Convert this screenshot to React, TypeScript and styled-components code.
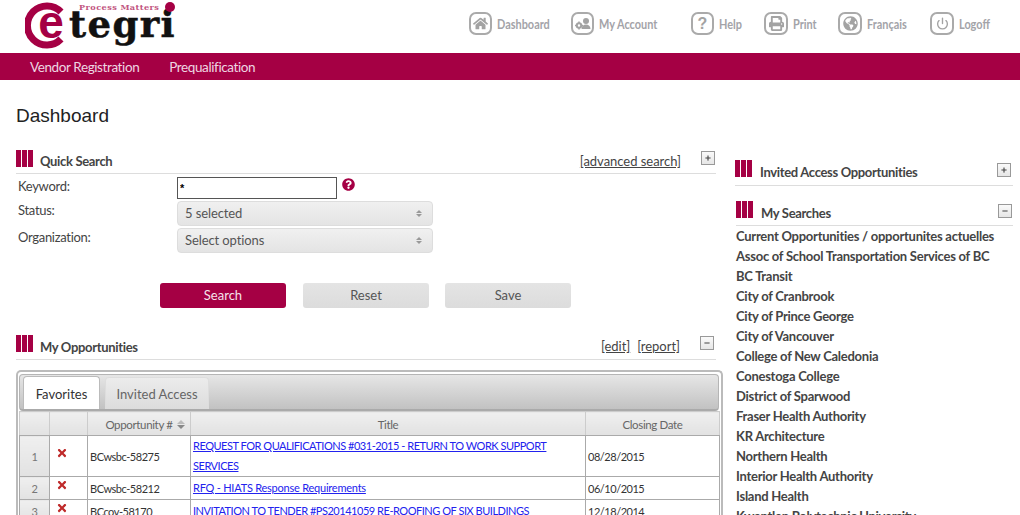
import React from "react";
import styled, { createGlobalStyle } from "styled-components";
import { FaHome, FaPrint, FaGlobeAmericas, FaTimes, FaQuestionCircle, FaPlus, FaMinus } from "react-icons/fa";
import { FiPower } from "react-icons/fi";

const maroon = "#a50044";
const bodyFont = `"Lato", "Liberation Sans", sans-serif`;

const Global = createGlobalStyle`
  html, body { margin: 0; padding: 0; height: 515px; overflow: hidden; background: #fff; }
  body { font-family: ${bodyFont}; color: #444; }
  * { box-sizing: border-box; }
`;

const Header = styled.header`
  height: 53px; display: flex; justify-content: space-between; align-items: flex-start;
  padding: 0 29px 0 25px;
`;
const Tools = styled.nav`display: flex; gap: 22px; padding-top: 12px;`;
const Tool = styled.a<{ $wide?: boolean }>`
  display: flex; align-items: center; gap: 5px; height: 23px;
  margin-right: ${(p) => (p.$wide ? "14px" : "0")};
  font: bold 14px ${bodyFont};
  color: #a3a3a8;
`;
const ToolIcon = styled.span<{ $w?: number }>`
  width: ${(p) => p.$w ?? 23}px; height: 23px; border: 2px solid #aaa; border-radius: 7px;
  display: flex; align-items: center; justify-content: center; color: #a3a3a3;
  font: bold 16px "Liberation Sans", sans-serif;
`;
const ToolLabel = styled.span<{ $w: number }>`
  display: block; width: ${(p) => p.$w}px; white-space: nowrap;
  transform: scaleX(0.78); transform-origin: left center;
`;
const NavBar = styled.nav`
  height: 27px; background: ${maroon}; display: flex; gap: 30px; padding-left: 30px; align-items: center;
  color: #eed6e2; font-size: 13.5px; letter-spacing: -0.4px;
`;
const PageTitle = styled.h1`
  margin: 24px 0 20px 16px; font: normal 19px/24px "Liberation Sans", sans-serif; color: #222;
`;
const Columns = styled.main`display: flex; align-items: flex-start; padding-left: 16px;`;
const Left = styled.section`width: 707px; flex: none;`;
const Right = styled.aside`width: 278px; flex: none; margin-left: 12px; padding-top: 10px;`;

const SectionHead = styled.div<{ $w: number; $h?: number; $indent?: number; $mt?: number }>`
  display: flex; align-items: flex-start; height: ${(p) => p.$h ?? 26}px; border-bottom: 1px solid #ddd;
  width: ${(p) => p.$w}px;
  margin-left: ${(p) => p.$indent ?? 0}px;
  margin-top: ${(p) => p.$mt ?? 0}px;
`;
const BarsBox = styled.span`display: flex; gap: 1px; margin-top: 2px; margin-right: 7px;`;
const Bar = styled.i`display: block; width: 5px; height: 17px; background: ${maroon};`;
const SectionTitle = styled.h2<{ $top?: number; $ml?: number }>`
  margin: ${(p) => p.$top ?? 6}px 0 0 ${(p) => p.$ml ?? 0}px; font-size: 13px; font-weight: 700; line-height: 16px;
  color: #444; flex: 1; letter-spacing: -0.33px;
`;
const Links = styled.div`display: flex; gap: 7px; margin-top: 5px; margin-right: 20px;`;
const BracketLink = styled.a`
  font-size: 13px; line-height: 16px; color: #444; text-decoration: underline; letter-spacing: -0.03px;
`;
const ToggleBox = styled.span<{ $mr?: number; $mt?: number }>`
  width: 14px; height: 14px; border: 1px solid #999; background: linear-gradient(#fafafa, #e6e6e6);
  display: flex; align-items: center; justify-content: center; color: #444;
  margin-top: ${(p) => p.$mt ?? 3}px; margin-right: ${(p) => p.$mr ?? 1}px;
`;
const Form = styled.div`
  display: grid; grid-template-columns: 159px 1fr; padding: 3px 0 0 2px; row-gap: 2px; width: 700px;
`;
const Label = styled.label`font-size: 13px; line-height: 16px; padding-top: 1px; color: #444; letter-spacing: -0.3px;`;
const KeywordRow = styled.div`display: flex; gap: 5px;`;
const Keyword = styled.input`
  width: 160px; height: 22px; border: 1px solid #555; padding: 0 2px; font: bold 11px "Liberation Sans", sans-serif; outline: none;
`;
const HelpMark = styled.span`color: ${maroon}; display: flex; padding-top: 1px; font-size: 13px;`;
const Select = styled.div`
  width: 256px; height: 25px; border: 1px solid #ddd; border-radius: 4px;
  background: linear-gradient(#f0f0f0, #e4e4e4);
  display: flex; align-items: center; justify-content: space-between; padding: 0 10px 1px 7px;
  font-size: 13px; color: #555; letter-spacing: -0.1px;
`;
const Updown = styled.span`display: flex; flex-direction: column; gap: 1px;`;
const Tri = styled.i<{ $up?: boolean; $size?: number; $c?: string }>`
  display: block; width: 0; height: 0;
  border-left: ${(p) => p.$size ?? 3}px solid transparent;
  border-right: ${(p) => p.$size ?? 3}px solid transparent;
  ${(p) => (p.$up ? "border-bottom" : "border-top")}: ${(p) => p.$size ?? 3}px solid ${(p) => p.$c ?? "#999"};
`;
const Buttons = styled.div`display: flex; margin: 30px 0 25px 144px;`;
const Btn = styled.button<{ $primary?: boolean }>`
  width: 126px; height: 25px; margin-right: ${(p) => (p.$primary ? "17px" : "16px")};
  border: 0; border-radius: 3px; font: 13px ${bodyFont}; padding: 0 0 2px;
  background: ${(p) => (p.$primary ? maroon : "linear-gradient(#e4e4e4,#dcdcdc)")};
  color: ${(p) => (p.$primary ? "#f5e3eb" : "#555")};
`;
const Panel = styled.div`
  margin-top: 10px; height: 200px; border: 2px solid #bbb; border-bottom: 0; border-radius: 5px 5px 0 0;
  padding: 2px 1px 0 1px;
`;
const TabBar = styled.div`
  height: 37px; margin-right: 1px; border-radius: 4px; border: 1px solid #b5b5b5; border-bottom: 2px solid #aaa;
  background: linear-gradient(#e6e6e6, #c2c2c2); display: flex; align-items: flex-end; gap: 5px; padding-left: 3px;
`;
const Tab = styled.div<{ $active?: boolean }>`
  height: ${(p) => (p.$active ? "33px" : "32px")};
  width: ${(p) => (p.$active ? "77px" : "104px")};
  border: 1px solid ${(p) => (p.$active ? "#bbb" : "#ddd")}; border-bottom: 0; border-radius: 4px 4px 0 0;
  background: ${(p) => (p.$active ? "#fff" : "linear-gradient(#ececec,#dcdcdc)")};
  color: ${(p) => (p.$active ? "#333" : "#666")};
  font-size: 13px; display: flex; align-items: center; justify-content: center; padding-top: 1px;
`;
const Table = styled.table`
  width: 701px; border-collapse: collapse; table-layout: fixed; font-size: 11px; letter-spacing: -0.47px; color: #333;
`;
const Th = styled.th`
  height: 24px; font-weight: 400; color: #666; border: 1px solid #ccc; border-bottom: 1px solid #aaa;
  background: linear-gradient(#efefef, #e2e2e2); font-size: 11.5px; letter-spacing: -0.35px; padding: 2px 0 0;
`;
const OppTh = styled(Th)`padding-left: 12px;`;
const ThInner = styled.span`display: inline-flex; align-items: center; gap: 4px;`;
const SortArrows = styled.span`display: inline-flex; flex-direction: column; gap: 1px;`;
const Td = styled.td`
  border: 1px solid #aaa; padding: 0 2px; vertical-align: middle;
`;
const NumCell = styled(Td)`
  background: linear-gradient(#efefef, #e2e2e2); color: #777; text-align: center;
`;
const XCell = styled(Td)`color: #bf2a2a; font-size: 12px; padding: 0 0 3px 6px;`;
const TitleLink = styled.a<{ $ls?: number }>`
  color: #2222ee; text-decoration: underline; line-height: 20px;
  letter-spacing: ${(p) => p.$ls ?? -0.47}px;
`;
const TitleText = styled.div`line-height: 20px;`;
const SearchList = styled.ul`list-style: none; margin: 0 0 0 1px; padding: 0;`;
const SearchItem = styled.li`
  height: 20px; line-height: 20px; font-size: 13px; font-weight: 700; color: #444; white-space: nowrap; letter-spacing: -0.26px;
`;

const Bars = () => (
  <BarsBox><Bar /><Bar /><Bar /></BarsBox>
);

const AccountIcon = () => (
  <svg width="18" height="14" viewBox="0 0 18 14" fill="#a3a3a3">
    <circle cx="12" cy="4" r="3" />
    <path d="M7.5 12c0-3 2-4.500 4.500-4.500s4.500 1.500 4.500 4.500z" />
    <circle cx="5" cy="8.500" r="2.200" fill="none" stroke="#a3a3a3" strokeWidth="2" />
    <path d="M5 4.500v1.500M5 11v1.500M1 8.500h1.500M7.500 8.500H9" stroke="#a3a3a3" strokeWidth="1.500" />
  </svg>
);

const Logo = () => (
  <svg width="154" height="50" viewBox="0 0 154 50" style={{ display: "block" }}>
    <path d="M36 12a19.500 19.500 0 1 0 0 27" fill="none" stroke={maroon} strokeWidth="7" />
    <text x="26" y="38" textAnchor="middle" fontFamily="'Liberation Sans', sans-serif" fontWeight="700" fontSize="46" fill={maroon}>e</text>
    <text x="54" y="9.500" fontFamily="'DejaVu Serif', serif" fontSize="8.200" fontWeight="700" letterSpacing="0.400" fill="#c2557f">Process Matters</text>
    <text x="44" y="37" fontFamily="'DejaVu Serif', serif" fontWeight="700" fontSize="37" letterSpacing="1.400" stroke="#111" strokeWidth="0.500" fill="#111">tegri</text>
    <circle cx="145" cy="7" r="5" fill={maroon} />
  </svg>
);

const rows = [
  { n: 1, id: "BCwsbc-58275", t: "REQUEST FOR QUALIFICATIONS #031-2015 - RETURN TO WORK SUPPORT SERVICES", d: "08/28/2015", h: 41 },
  { n: 2, id: "BCwsbc-58212", t: "RFQ - HIATS Response Requirements", d: "06/10/2015", h: 23, ls: -0.23 },
  { n: 3, id: "BCcov-58170", t: "INVITATION TO TENDER #PS20141059 RE-ROOFING OF SIX BUILDINGS", d: "12/18/2014", h: 23 },
];

const searches = [
  "Current Opportunities / opportunites actuelles",
  "Assoc of School Transportation Services of BC",
  "BC Transit",
  "City of Cranbrook",
  "City of Prince George",
  "City of Vancouver",
  "College of New Caledonia",
  "Conestoga College",
  "District of Sparwood",
  "Fraser Health Authority",
  "KR Architecture",
  "Northern Health",
  "Interior Health Authority",
  "Island Health",
  "Kwantlen Polytechnic University",
];

export default function App() {
  return (
    <>
      <Global />
      <Header>
        <Logo />
        <Tools>
          <Tool><ToolIcon><FaHome size={15} /></ToolIcon><ToolLabel $w={52}>Dashboard</ToolLabel></Tool>
          <Tool $wide><ToolIcon><AccountIcon /></ToolIcon><ToolLabel $w={56}>My Account</ToolLabel></Tool>
          <Tool><ToolIcon>?</ToolIcon><ToolLabel $w={23}>Help</ToolLabel></Tool>
          <Tool><ToolIcon $w={24}><FaPrint size={15} /></ToolIcon><ToolLabel $w={23}>Print</ToolLabel></Tool>
          <Tool><ToolIcon $w={24}><FaGlobeAmericas size={15} /></ToolIcon><ToolLabel $w={41}>Français</ToolLabel></Tool>
          <Tool><ToolIcon $w={24}><FiPower size={13} strokeWidth={2.5} /></ToolIcon><ToolLabel $w={32}>Logoff</ToolLabel></Tool>
        </Tools>
      </Header>
      <NavBar><span>Vendor Registration</span><span>Prequalification</span></NavBar>
      <PageTitle>Dashboard</PageTitle>
      <Columns>
        <Left>
          <SectionHead $w={700}>
            <Bars />
            <SectionTitle $top={5}>Quick Search</SectionTitle>
            <Links><BracketLink>[advanced search]</BracketLink></Links>
            <ToggleBox><FaPlus size={6} /></ToggleBox>
          </SectionHead>
          <Form>
            <Label>Keyword:</Label>
            <KeywordRow>
              <Keyword defaultValue="*" />
              <HelpMark><FaQuestionCircle size={13} /></HelpMark>
            </KeywordRow>
            <Label>Status:</Label>
            <Select>5 selected<Updown><Tri $up /><Tri /></Updown></Select>
            <Label>Organization:</Label>
            <Select>Select options<Updown><Tri $up /><Tri /></Updown></Select>
          </Form>
          <Buttons>
            <Btn $primary>Search</Btn>
            <Btn>Reset</Btn>
            <Btn>Save</Btn>
          </Buttons>
          <SectionHead $w={700} $h={27}>
            <Bars />
            <SectionTitle>My Opportunities</SectionTitle>
            <Links><BracketLink>[edit]</BracketLink><BracketLink>[report]</BracketLink></Links>
            <ToggleBox $mr={2} $mt={3}><FaMinus size={6} /></ToggleBox>
          </SectionHead>
          <Panel>
            <TabBar>
              <Tab $active>Favorites</Tab>
              <Tab>Invited Access</Tab>
            </TabBar>
            <Table>
              <colgroup>
                <col style={{ width: 30 }} />
                <col style={{ width: 38 }} />
                <col style={{ width: 103 }} />
                <col style={{ width: 395 }} />
                <col />
              </colgroup>
              <thead>
                <tr>
                  <Th /><Th />
                  <OppTh><ThInner>Opportunity # <SortArrows><Tri $up $size={4} $c="#bbb" /><Tri $size={4} $c="#888" /></SortArrows></ThInner></OppTh>
                  <Th>Title</Th>
                  <Th>Closing Date</Th>
                </tr>
              </thead>
              <tbody>
                {rows.map((r) => (
                  <tr key={r.n} style={{ height: r.h }}>
                    <NumCell>{r.n}</NumCell>
                    <XCell><FaTimes /></XCell>
                    <Td>{r.id}</Td>
                    <Td><TitleText><TitleLink $ls={r.ls}>{r.t}</TitleLink></TitleText></Td>
                    <Td>{r.d}</Td>
                  </tr>
                ))}
              </tbody>
            </Table>
          </Panel>
        </Left>
        <Right>
          <SectionHead $w={278} $h={28}>
            <Bars />
            <SectionTitle $ml={1}>Invited Access Opportunities</SectionTitle>
            <ToggleBox $mt={5} $mr={2}><FaPlus size={6} /></ToggleBox>
          </SectionHead>
          <SectionHead $w={277} $h={27} $indent={1} $mt={13}>
            <Bars />
            <SectionTitle $top={6} $ml={1}>My Searches</SectionTitle>
            <ToggleBox $mt={5} $mr={1}><FaMinus size={6} /></ToggleBox>
          </SectionHead>
          <SearchList>
            {searches.map((s) => <SearchItem key={s}>{s}</SearchItem>)}
          </SearchList>
        </Right>
      </Columns>
    </>
  );
}
